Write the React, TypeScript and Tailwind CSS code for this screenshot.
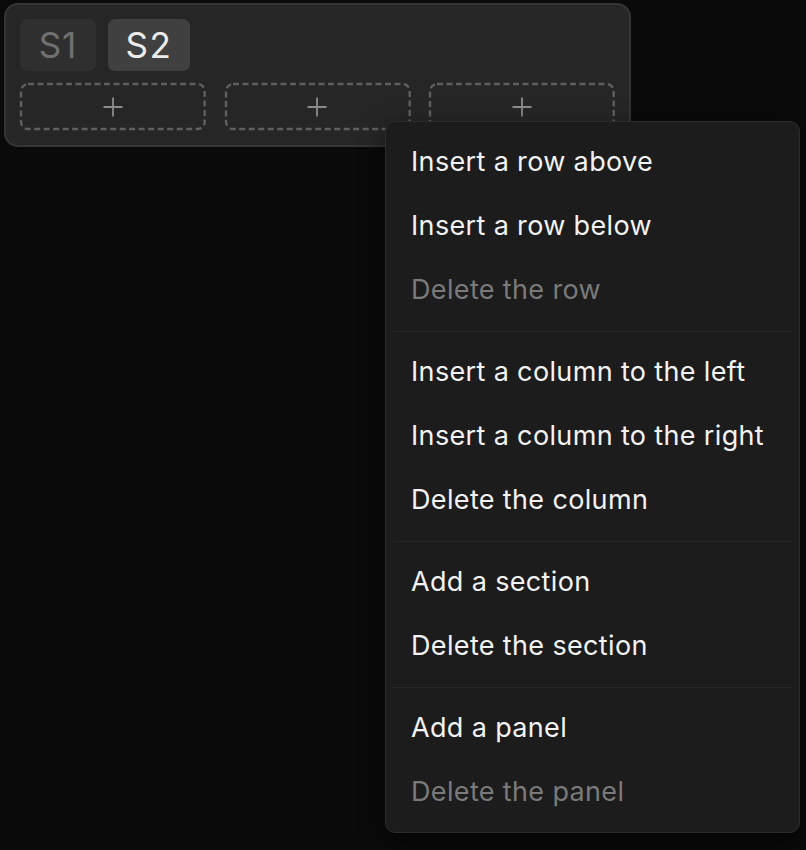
type MenuItem = {
  label: string;
  disabled?: boolean;
};

const groups: MenuItem[][] = [
  [
    { label: "Insert a row above" },
    { label: "Insert a row below" },
    { label: "Delete the row", disabled: true },
  ],
  [
    { label: "Insert a column to the left" },
    { label: "Insert a column to the right" },
    { label: "Delete the column" },
  ],
  [{ label: "Add a section" }, { label: "Delete the section" }],
  [{ label: "Add a panel" }, { label: "Delete the panel", disabled: true }],
];

function DropSlot() {
  return (
    <div className="relative flex h-[47px] items-center justify-center">
      {/* dashed outline, drawn so the dash rhythm matches */}
      <svg className="absolute inset-[1px] h-[calc(100%-2px)] w-[calc(100%-2px)] overflow-visible">
        <rect
          x="0"
          y="0"
          width="100%"
          height="100%"
          rx="7"
          fill="none"
          stroke="#5f5f5f"
          strokeWidth="2.4"
          strokeDasharray="6 3.5"
        />
      </svg>
      <svg width="22" height="22" viewBox="0 0 22 22">
        <path d="M11 1.5v19M1.5 11h19" stroke="#8c8c8c" strokeWidth="1.8" />
      </svg>
    </div>
  );
}

export default function App() {
  return (
    <div
      className="relative min-h-[850px] w-full bg-[#0a0a0a] pt-[3px] pl-[4px]"
      style={{ fontFamily: "Inter, 'Noto Sans', sans-serif" }}
    >
      <div className="w-[627px] rounded-[14px] border-2 border-[#343434] bg-[#262626] px-[14px] pt-[14px] pb-[15px]">
        <div className="flex gap-3">
          <button className="flex h-[52px] w-[76px] items-center justify-center rounded-[7px] bg-[#2f2f2f] text-[35px] leading-none tracking-[1px] text-[#707070]">
            S1
          </button>
          <button className="flex h-[52px] w-[82px] items-center justify-center rounded-[7px] bg-[#404040] text-[35px] leading-none tracking-[1.5px] text-[#ececec]">
            S2
          </button>
        </div>
        <div className="mt-3 grid grid-cols-3 gap-[19px]">
          <DropSlot />
          <DropSlot />
          <DropSlot />
        </div>
      </div>

      <div className="absolute left-[385px] top-[121px] w-[415px] rounded-[10px] border border-[#2c2c2c] bg-[#1c1c1c] py-2 px-[7px] shadow-[0_8px_24px_rgba(0,0,0,0.5)]">
        {groups.map((group, gi) => (
          <div key={gi}>
            {gi > 0 && (
              <div className="flex h-[18px] items-center">
                <div className="h-px w-full bg-[#272727]" />
              </div>
            )}
            {group.map((item) => (
              <div
                key={item.label}
                className={
                  "flex h-16 items-center pl-[18px] text-[27px] tracking-[0.35px] " +
                  (item.disabled ? "text-[#7a7a7a]" : "text-[#f2f2f2]")
                }
              >
                {item.label}
              </div>
            ))}
          </div>
        ))}
      </div>
    </div>
  );
}
